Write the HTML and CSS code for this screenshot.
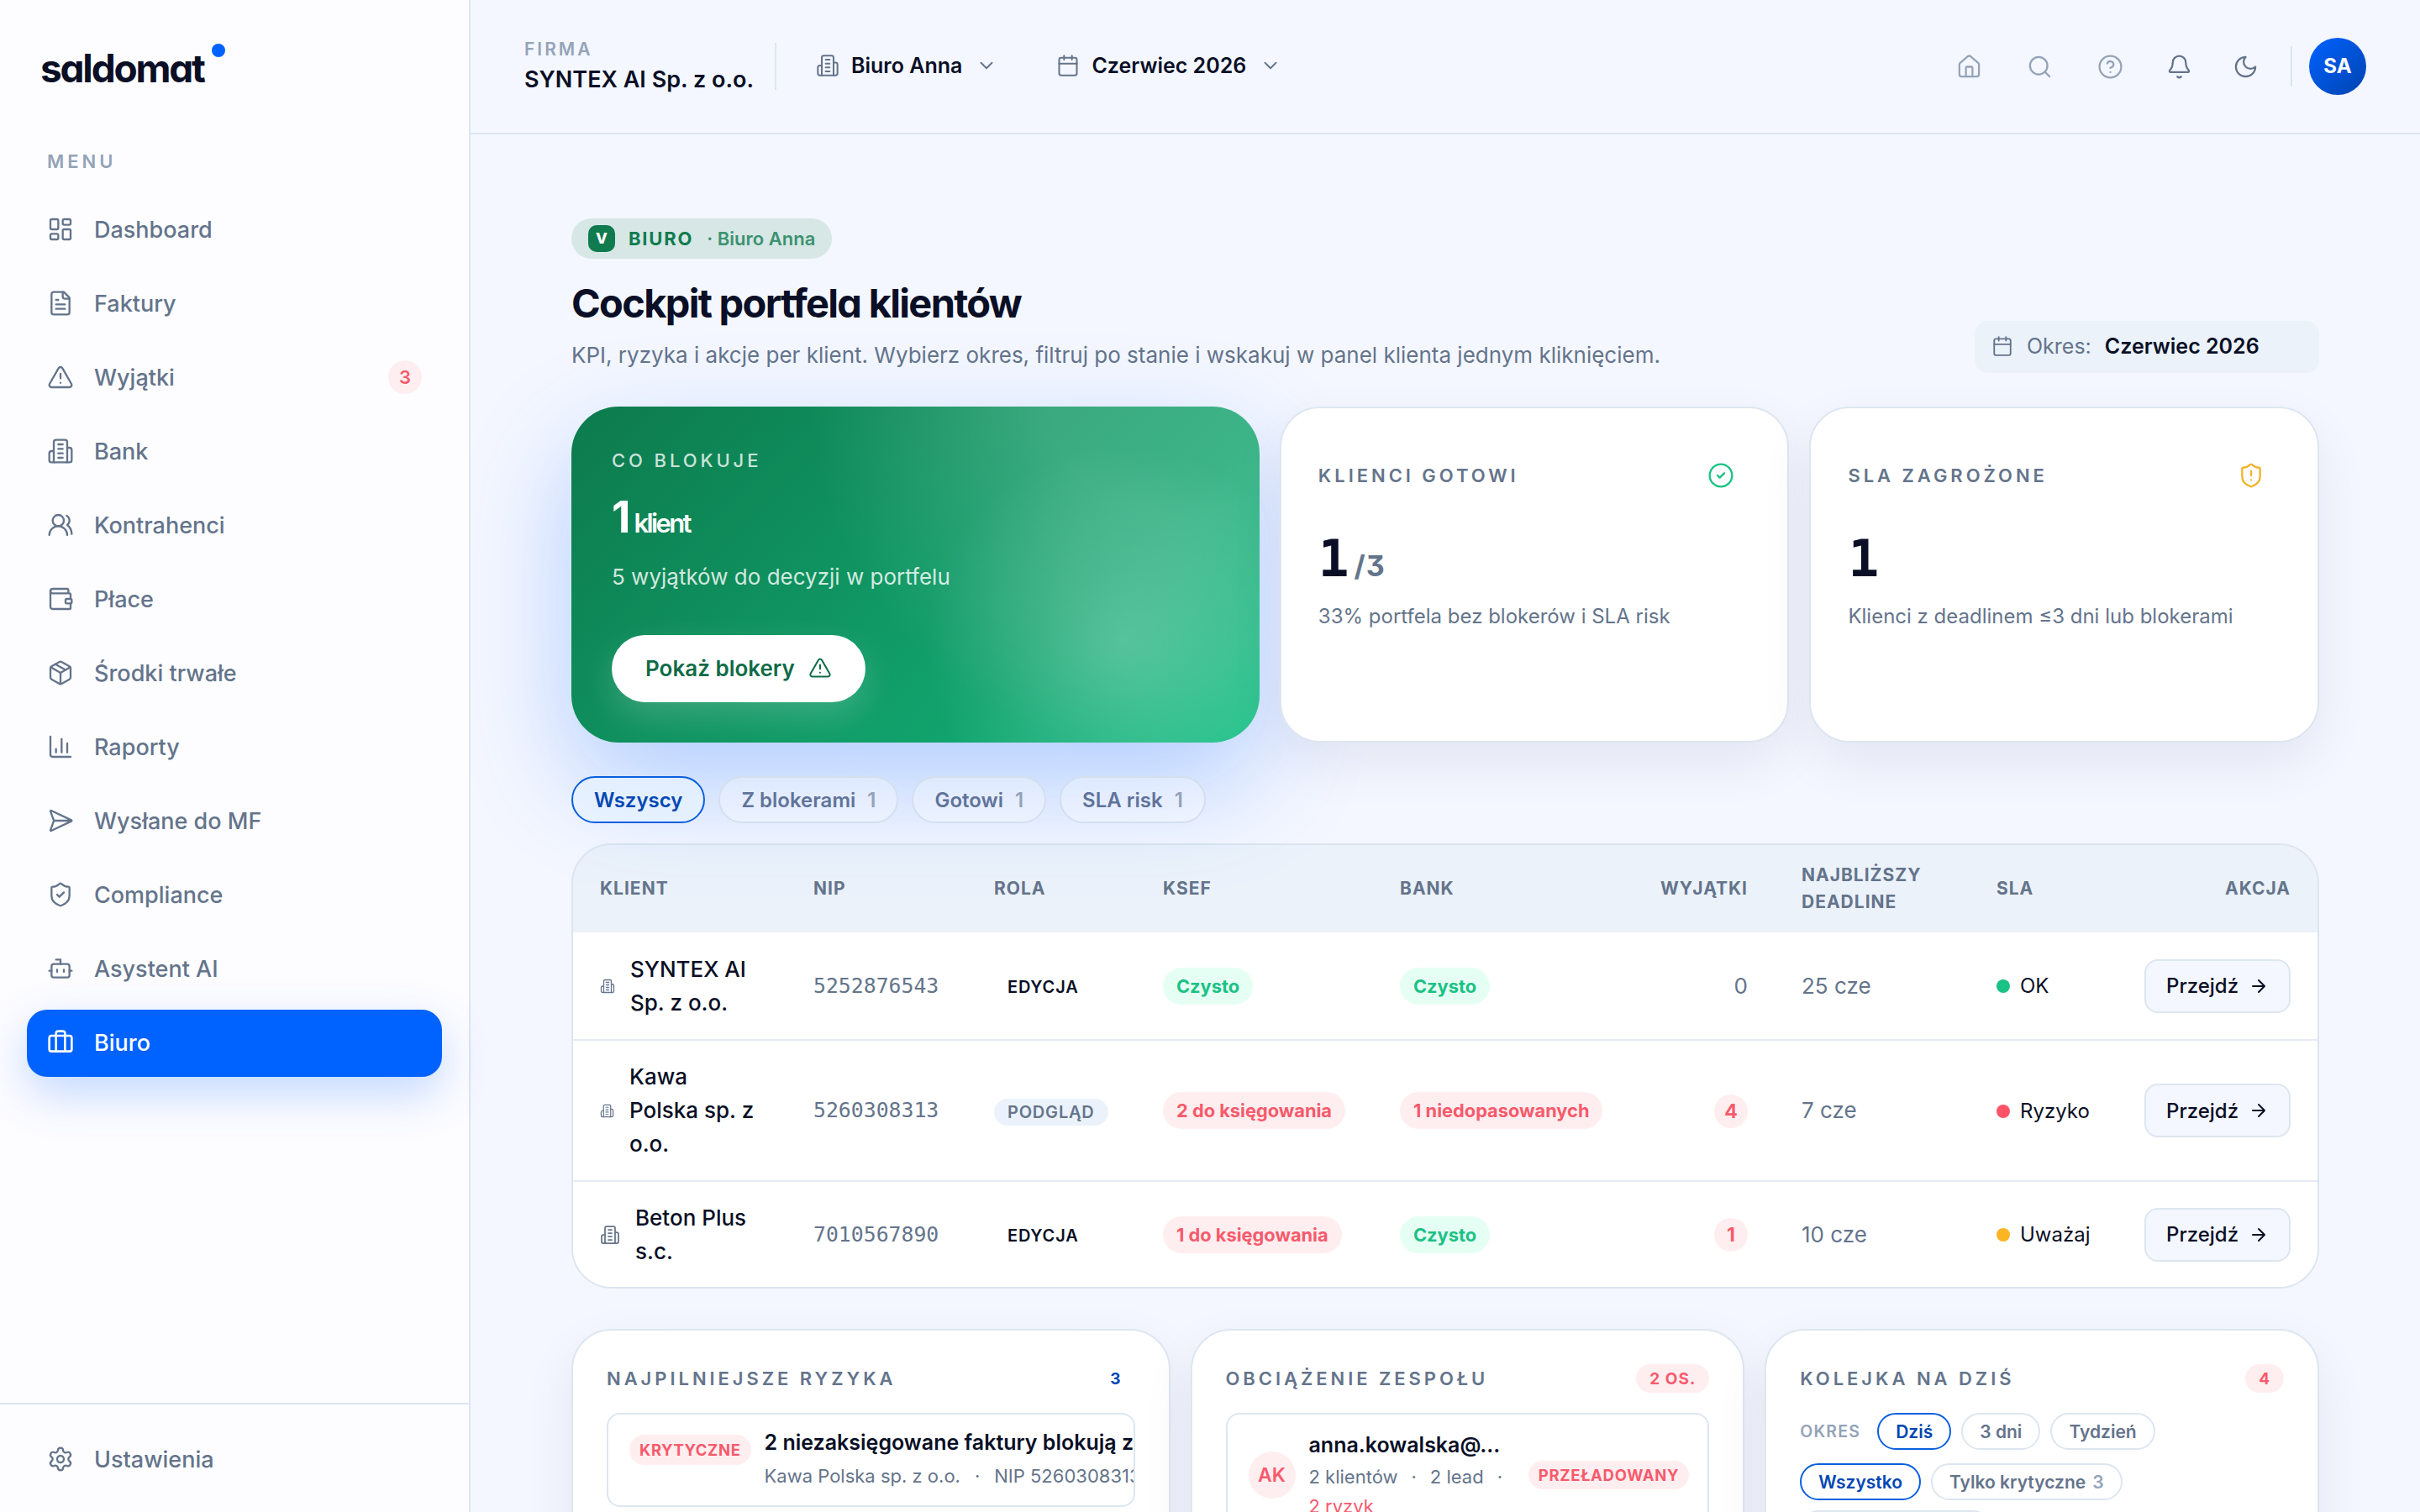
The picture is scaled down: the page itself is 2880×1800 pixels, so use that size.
FILE: index.html
```html
<!DOCTYPE html>
<html lang="pl">
<head>
    <meta charset="UTF-8">
    <meta name="viewport" content="width=device-width, initial-scale=1.0">
    <title>Saldomat • Cockpit portfela klientów</title>
    <link rel="stylesheet" href="styles.css">
</head>
<body>
    <!-- Icon sprite -->
    <svg class="sprite" width="0" height="0">
        <symbol id="i-dashboard" viewBox="0 0 24 24"><rect x="3" y="3" width="7" height="9" rx="1.2"/><rect x="14" y="3" width="7" height="5" rx="1.2"/><rect x="14" y="12" width="7" height="9" rx="1.2"/><rect x="3" y="16" width="7" height="5" rx="1.2"/></symbol>
        <symbol id="i-file" viewBox="0 0 24 24"><path d="M15 2H6a2 2 0 0 0-2 2v16a2 2 0 0 0 2 2h12a2 2 0 0 0 2-2V7Z"/><path d="M14 2v4a2 2 0 0 0 2 2h4M10 9H8M16 13H8M16 17H8"/></symbol>
        <symbol id="i-alert" viewBox="0 0 24 24"><path d="m21.73 18-8-14a2 2 0 0 0-3.48 0l-8 14A2 2 0 0 0 4 21h16a2 2 0 0 0 1.73-3M12 9v4M12 17h.01"/></symbol>
        <symbol id="i-building" viewBox="0 0 24 24"><path d="M6 22V4a2 2 0 0 1 2-2h8a2 2 0 0 1 2 2v18Z"/><path d="M6 12H4a2 2 0 0 0-2 2v6a2 2 0 0 0 2 2h2M18 9h2a2 2 0 0 1 2 2v9a2 2 0 0 1-2 2h-2M10 6h4M10 10h4M10 14h4M10 18h4"/></symbol>
        <symbol id="i-users" viewBox="0 0 24 24"><path d="M18 21a8 8 0 0 0-16 0"/><circle cx="10" cy="8" r="5"/><path d="M22 20c0-3.37-2-6.5-4-8a5 5 0 0 0-.45-8.3"/></symbol>
        <symbol id="i-wallet" viewBox="0 0 24 24"><path d="M19 7V4a1 1 0 0 0-1-1H5a2 2 0 0 0 0 4h15a1 1 0 0 1 1 1v4"/><path d="M3 5v14a2 2 0 0 0 2 2h15a1 1 0 0 0 1-1v-4"/><rect x="16.5" y="12" width="5.5" height="4" rx="1"/></symbol>
        <symbol id="i-box" viewBox="0 0 24 24"><path d="M11 21.73a2 2 0 0 0 2 0l7-4A2 2 0 0 0 21 16V8a2 2 0 0 0-1-1.73l-7-4a2 2 0 0 0-2 0l-7 4A2 2 0 0 0 3 8v8a2 2 0 0 0 1 1.73zM12 22V12"/><path d="m3.3 7 8.7 5 8.7-5M7.5 4.27l9 5.15"/></symbol>
        <symbol id="i-chart" viewBox="0 0 24 24"><path d="M3 3v16a2 2 0 0 0 2 2h16M13 17V5M18 17V9M8 17v-3"/></symbol>
        <symbol id="i-send" viewBox="0 0 24 24"><path d="M3.71 3.05a.5.5 0 0 0-.68.63l2.85 7.63a2 2 0 0 1 0 1.4l-2.85 7.63a.5.5 0 0 0 .68.62l18-8.5a.5.5 0 0 0 0-.9zM6 12h16"/></symbol>
        <symbol id="i-shield-check" viewBox="0 0 24 24"><path d="M20 13c0 5-3.5 7.5-7.66 8.95a1 1 0 0 1-.67-.01C7.5 20.5 4 18 4 13V6a1 1 0 0 1 1-1c2 0 4.5-1.2 6.24-2.72a1.17 1.17 0 0 1 1.52 0C14.51 3.81 17 5 19 5a1 1 0 0 1 1 1z"/><path d="m9 12 2 2 4-4"/></symbol>
        <symbol id="i-shield-alert" viewBox="0 0 24 24"><path d="M20 13c0 5-3.5 7.5-7.66 8.95a1 1 0 0 1-.67-.01C7.5 20.5 4 18 4 13V6a1 1 0 0 1 1-1c2 0 4.5-1.2 6.24-2.72a1.17 1.17 0 0 1 1.52 0C14.51 3.81 17 5 19 5a1 1 0 0 1 1 1z"/><path d="M12 8v4M12 16h.01"/></symbol>
        <symbol id="i-bot" viewBox="0 0 24 24"><path d="M12 8V4H8"/><rect x="4" y="8" width="16" height="12" rx="2"/><path d="M2 14h2M20 14h2M15 13v2M9 13v2"/></symbol>
        <symbol id="i-briefcase" viewBox="0 0 24 24"><path d="M16 20V4a2 2 0 0 0-2-2h-4a2 2 0 0 0-2 2v16"/><rect x="2" y="6" width="20" height="14" rx="2"/></symbol>
        <symbol id="i-settings" viewBox="0 0 24 24"><path d="M9.67 4.14a2.34 2.34 0 0 1 4.66 0 2.34 2.34 0 0 0 3.32 1.91 2.34 2.34 0 0 1 2.33 4.04 2.34 2.34 0 0 0 0 3.82 2.34 2.34 0 0 1-2.33 4.04 2.34 2.34 0 0 0-3.32 1.91 2.34 2.34 0 0 1-4.66 0 2.34 2.34 0 0 0-3.32-1.91 2.34 2.34 0 0 1-2.33-4.04 2.34 2.34 0 0 0 0-3.82 2.34 2.34 0 0 1 2.33-4.04 2.34 2.34 0 0 0 3.32-1.91"/><circle cx="12" cy="12" r="3"/></symbol>
        <symbol id="i-calendar" viewBox="0 0 24 24"><path d="M8 2v4M16 2v4"/><rect x="3" y="4" width="18" height="18" rx="2"/><path d="M3 10h18"/></symbol>
        <symbol id="i-chevron" viewBox="0 0 24 24"><path d="m6 9 6 6 6-6"/></symbol>
        <symbol id="i-home" viewBox="0 0 24 24"><path d="M15 21v-8a1 1 0 0 0-1-1h-4a1 1 0 0 0-1 1v8"/><path d="M3 10a2 2 0 0 1 .71-1.53l7-6a2 2 0 0 1 2.58 0l7 6A2 2 0 0 1 21 10v9a2 2 0 0 1-2 2H5a2 2 0 0 1-2-2z"/></symbol>
        <symbol id="i-search" viewBox="0 0 24 24"><circle cx="11" cy="11" r="8"/><path d="m21 21-4.3-4.3"/></symbol>
        <symbol id="i-help" viewBox="0 0 24 24"><circle cx="12" cy="12" r="10"/><path d="M9.09 9a3 3 0 0 1 5.83 1c0 2-3 3-3 3M12 17h.01"/></symbol>
        <symbol id="i-bell" viewBox="0 0 24 24"><path d="M10.27 21a2 2 0 0 0 3.46 0M3.26 15.33A1 1 0 0 0 4 17h16a1 1 0 0 0 .74-1.67C19.41 13.96 18 12.5 18 8A6 6 0 0 0 6 8c0 4.5-1.41 5.96-2.74 7.33"/></symbol>
        <symbol id="i-moon" viewBox="0 0 24 24"><path d="M12 3a6 6 0 0 0 9 9 9 9 0 1 1-9-9Z"/></symbol>
        <symbol id="i-check" viewBox="0 0 24 24"><circle cx="12" cy="12" r="10"/><path d="m9 12 2 2 4-4"/></symbol>
        <symbol id="i-arrow" viewBox="0 0 24 24"><path d="M5 12h14M12 5l7 7-7 7"/></symbol>
    </svg>

    <div class="app">
        <!-- Sidebar -->
        <aside class="sidebar">
            <div class="logo">saldomat<span class="logo-dot"></span></div>
            <div class="menu-label">MENU</div>
            <nav class="nav">
                <a class="nav-item"><svg class="icon"><use href="#i-dashboard"/></svg>Dashboard</a>
                <a class="nav-item"><svg class="icon"><use href="#i-file"/></svg>Faktury</a>
                <a class="nav-item"><svg class="icon"><use href="#i-alert"/></svg>Wyjątki<span class="nav-badge">3</span></a>
                <a class="nav-item"><svg class="icon"><use href="#i-building"/></svg>Bank</a>
                <a class="nav-item"><svg class="icon"><use href="#i-users"/></svg>Kontrahenci</a>
                <a class="nav-item"><svg class="icon"><use href="#i-wallet"/></svg>Płace</a>
                <a class="nav-item"><svg class="icon"><use href="#i-box"/></svg>Środki trwałe</a>
                <a class="nav-item"><svg class="icon"><use href="#i-chart"/></svg>Raporty</a>
                <a class="nav-item"><svg class="icon"><use href="#i-send"/></svg>Wysłane do MF</a>
                <a class="nav-item"><svg class="icon"><use href="#i-shield-check"/></svg>Compliance</a>
                <a class="nav-item"><svg class="icon"><use href="#i-bot"/></svg>Asystent AI</a>
                <a class="nav-item active"><svg class="icon"><use href="#i-briefcase"/></svg>Biuro</a>
            </nav>
            <div class="sidebar-footer">
                <a class="nav-item"><svg class="icon"><use href="#i-settings"/></svg>Ustawienia</a>
            </div>
        </aside>

        <div class="main">
            <!-- Topbar -->
            <header class="topbar">
                <div class="company">
                    <span class="company-label">FIRMA</span>
                    <span class="company-name">SYNTEX AI Sp. z o.o.</span>
                </div>
                <span class="divider"></span>
                <button class="switcher office"><svg class="icon"><use href="#i-building"/></svg>Biuro Anna<svg class="icon chevron"><use href="#i-chevron"/></svg></button>
                <button class="switcher"><svg class="icon"><use href="#i-calendar"/></svg>Czerwiec 2026<svg class="icon chevron"><use href="#i-chevron"/></svg></button>
                <div class="tools">
                    <svg class="icon muted"><use href="#i-home"/></svg>
                    <svg class="icon muted"><use href="#i-search"/></svg>
                    <svg class="icon muted"><use href="#i-help"/></svg>
                    <svg class="icon bell"><use href="#i-bell"/></svg>
                    <svg class="icon"><use href="#i-moon"/></svg>
                </div>
                <span class="divider short"></span>
                <div class="avatar">SA</div>
            </header>

            <div class="content">
                <div class="page-header">
                    <div>
                        <div class="context-badge">
                            <span class="context-mark">V</span>
                            <span class="context-name">BIURO</span>
                            <span class="context-sub">· Biuro Anna</span>
                        </div>
                        <h1>Cockpit portfela klientów</h1>
                        <p class="subtitle">KPI, ryzyka i akcje per klient. Wybierz okres, filtruj po stanie i wskakuj w panel klienta jednym kliknięciem.</p>
                    </div>
                    <div class="period"><svg class="icon"><use href="#i-calendar"/></svg><span>Okres:</span><strong>Czerwiec 2026</strong></div>
                </div>

                <!-- KPI -->
                <section class="kpis">
                    <div class="hero">
                        <div class="hero-label">CO BLOKUJE</div>
                        <div class="hero-value">1<small>klient</small></div>
                        <p class="hero-text">5 wyjątków do decyzji w portfelu</p>
                        <button class="hero-btn">Pokaż blokery<svg class="icon"><use href="#i-alert"/></svg></button>
                    </div>
                    <div class="card kpi">
                        <div class="kpi-head"><span class="eyebrow">KLIENCI GOTOWI</span><svg class="icon green"><use href="#i-check"/></svg></div>
                        <div class="kpi-value">1<small>/3</small></div>
                        <p class="kpi-text">33% portfela bez blokerów i SLA risk</p>
                    </div>
                    <div class="card kpi">
                        <div class="kpi-head"><span class="eyebrow">SLA ZAGROŻONE</span><svg class="icon amber"><use href="#i-shield-alert"/></svg></div>
                        <div class="kpi-value">1</div>
                        <p class="kpi-text">Klienci z deadlinem ≤3 dni lub blokerami</p>
                    </div>
                </section>

                <div class="filters">
                    <button class="pill active">Wszyscy</button>
                    <button class="pill">Z blokerami<span>1</span></button>
                    <button class="pill">Gotowi<span>1</span></button>
                    <button class="pill">SLA risk<span>1</span></button>
                </div>

                <!-- Clients table -->
                <div class="table-wrap">
                    <table>
                        <colgroup>
                            <col class="c-client"><col class="c-nip"><col class="c-role"><col class="c-ksef"><col class="c-bank">
                            <col class="c-exc"><col class="c-deadline"><col class="c-sla"><col class="c-action">
                        </colgroup>
                        <thead>
                            <tr>
                                <th>KLIENT</th>
                                <th>NIP</th>
                                <th>ROLA</th>
                                <th>KSEF</th>
                                <th>BANK</th>
                                <th class="right">WYJĄTKI</th>
                                <th>NAJBLIŻSZY DEADLINE</th>
                                <th>SLA</th>
                                <th class="right">AKCJA</th>
                            </tr>
                        </thead>
                        <tbody>
                            <tr>
                                <td><div class="client"><svg class="icon s"><use href="#i-building"/></svg><span>SYNTEX AI Sp. z o.o.</span></div></td>
                                <td class="nip">5252876543</td>
                                <td><span class="role">EDYCJA</span></td>
                                <td><span class="tag ok">Czysto</span></td>
                                <td><span class="tag ok">Czysto</span></td>
                                <td class="right dim">0</td>
                                <td class="dim">25 cze</td>
                                <td><span class="sla ok">OK</span></td>
                                <td class="right"><button class="go">Przejdź<svg class="icon"><use href="#i-arrow"/></svg></button></td>
                            </tr>
                            <tr class="tall">
                                <td><div class="client"><svg class="icon xs"><use href="#i-building"/></svg><span>Kawa<br>Polska sp. z<br>o.o.</span></div></td>
                                <td class="nip">5260308313</td>
                                <td><span class="role view">PODGLĄD</span></td>
                                <td><span class="tag bad">2 do księgowania</span></td>
                                <td><span class="tag bad">1 niedopasowanych</span></td>
                                <td class="right"><span class="count">4</span></td>
                                <td class="dim">7 cze</td>
                                <td><span class="sla risk">Ryzyko</span></td>
                                <td class="right"><button class="go">Przejdź<svg class="icon"><use href="#i-arrow"/></svg></button></td>
                            </tr>
                            <tr>
                                <td><div class="client"><svg class="icon"><use href="#i-building"/></svg><span>Beton Plus<br>s.c.</span></div></td>
                                <td class="nip">7010567890</td>
                                <td><span class="role">EDYCJA</span></td>
                                <td><span class="tag bad">1 do księgowania</span></td>
                                <td><span class="tag ok">Czysto</span></td>
                                <td class="right"><span class="count">1</span></td>
                                <td class="dim">10 cze</td>
                                <td><span class="sla warn">Uważaj</span></td>
                                <td class="right"><button class="go">Przejdź<svg class="icon"><use href="#i-arrow"/></svg></button></td>
                            </tr>
                        </tbody>
                    </table>
                </div>

                <!-- Risks, team, queue -->
                <section class="panels">
                    <div class="card panel">
                        <div class="panel-head"><span class="eyebrow">NAJPILNIEJSZE RYZYKA</span><span class="badge blue">3</span></div>
                        <div class="item risk-item">
                            <span class="badge level">KRYTYCZNE</span>
                            <div class="item-body">
                                <div class="item-title">2 niezaksięgowane faktury blokują zamknięcie</div>
                                <div class="item-meta">Kawa Polska sp. z o.o.<i>·</i>NIP 5260308313</div>
                            </div>
                        </div>
                    </div>
                    <div class="card panel">
                        <div class="panel-head"><span class="eyebrow">OBCIĄŻENIE ZESPOŁU</span><span class="badge">2 OS.</span></div>
                        <div class="item team-item">
                            <span class="initials">AK</span>
                            <div class="item-body">
                                <div class="item-title">anna.kowalska@...</div>
                                <div class="item-meta">2 klientów<i>·</i>2 lead<i>·</i><br><em>2 ryzyk</em></div>
                            </div>
                            <span class="badge load">PRZEŁADOWANY</span>
                        </div>
                    </div>
                    <div class="card panel">
                        <div class="panel-head"><span class="eyebrow">KOLEJKA NA DZIŚ</span><span class="badge">4</span></div>
                        <div class="queue-row">
                            <span class="queue-label">OKRES</span>
                            <button class="pill small active">Dziś</button>
                            <button class="pill small">3 dni</button>
                            <button class="pill small">Tydzień</button>
                        </div>
                        <div class="queue-row">
                            <button class="pill small active">Wszystko</button>
                            <button class="pill small">Tylko krytyczne<span>3</span></button>
                            <button class="pill small">Tylko zagrożone<span>1</span></button>
                        </div>
                    </div>
                </section>
            </div>
        </div>
    </div>
</body>
</html>
```

FILE: styles.css
```css
* {
    margin: 0;
    padding: 0;
    box-sizing: border-box;
}

:root {
    --bg: #f4f7ff;
    --ink: #0a0f26;
    --slate: #64748b;
    --muted: #94a3b8;
    --line: #dde6f0;
    --blue: #0062ff;
    --blue-dark: #0047b3;
    --red: #f75a6c;
    --red-soft: #ffeef0;
    --green: #1bc285;
    --green-soft: #e6fff4;
    --amber: #fbb424;
}

body {
    font-family: Inter, 'Liberation Sans', sans-serif;
    background: var(--bg);
    color: var(--ink);
    height: 100vh;
    overflow: hidden;
}

button {
    font-family: inherit;
    color: inherit;
    background: none;
    border: none;
}

.sprite {
    display: none;
}

.icon {
    width: 32px;
    height: 32px;
    flex-shrink: 0;
    fill: none;
    stroke: currentColor;
    stroke-width: 1.75;
    stroke-linecap: round;
    stroke-linejoin: round;
}

.app {
    display: flex;
    height: 100vh;
}

/* Sidebar */
.sidebar {
    width: 560px;
    flex-shrink: 0;
    display: flex;
    flex-direction: column;
    background: #fdfdff;
    border-right: 2px solid var(--line);
    position: relative;
    z-index: 1;
}

.logo {
    display: flex;
    height: 178px;
    padding: 50px 0 0 48px;
    font-size: 46px;
    line-height: 62px;
    font-weight: 700;
    letter-spacing: -2.2px;
    font-feature-settings: "cv11";
}

.logo-dot {
    width: 16px;
    height: 16px;
    margin: 2px 0 0 9px;
    border-radius: 50%;
    background: var(--blue);
}

.menu-label {
    height: 56px;
    padding-left: 56px;
    font-size: 22px;
    line-height: 28px;
    font-weight: 600;
    letter-spacing: 4px;
    color: var(--muted);
}

.nav {
    flex: 1;
    display: flex;
    flex-direction: column;
    gap: 8px;
    padding: 0 32px;
}

.nav-item {
    display: flex;
    align-items: center;
    gap: 24px;
    height: 80px;
    padding: 0 24px 2px;
    border-radius: 24px;
    font-size: 27px;
    font-weight: 500;
    color: var(--slate);
}

.nav-item.active {
    background: var(--blue);
    color: #fff;
    box-shadow: 0 20px 56px rgba(0, 98, 255, 0.24);
}

.nav-item.active .icon {
    stroke-width: 2;
}

.nav-badge {
    width: 40px;
    height: 40px;
    margin-left: auto;
    border-radius: 50%;
    background: var(--red-soft);
    color: var(--red);
    font-size: 22px;
    line-height: 40px;
    font-weight: 600;
    text-align: center;
}

.sidebar-footer {
    height: 130px;
    padding: 26px 32px;
    border-top: 2px solid var(--line);
}

/* Topbar */
.main {
    flex: 1;
    min-width: 0;
}

.topbar {
    display: flex;
    align-items: center;
    height: 160px;
    padding: 0 64px;
    border-bottom: 2px solid var(--line);
}

.company {
    display: flex;
    flex-direction: column;
    gap: 3px;
    width: 298px;
}

.company-label {
    font-size: 21px;
    line-height: 28px;
    font-weight: 600;
    letter-spacing: 3px;
    color: var(--muted);
}

.company-name {
    font-size: 27px;
    line-height: 38px;
    font-weight: 600;
    white-space: nowrap;
}

.divider {
    width: 2px;
    height: 56px;
    background: var(--line);
}

.divider.short {
    height: 48px;
    margin: 0 20px 0 38px;
}

.switcher {
    display: flex;
    align-items: center;
    gap: 14px;
    padding-bottom: 2px;
    font-size: 25px;
    font-weight: 600;
}

.switcher.office {
    margin: 0 70px 0 47px;
}

.switcher .icon {
    width: 28px;
    height: 28px;
    color: var(--slate);
}

.switcher .chevron {
    width: 26px;
    height: 26px;
    margin-left: 2px;
}

.tools {
    display: flex;
    gap: 53px;
    margin-left: auto;
    color: var(--slate);
}

.tools .icon {
    width: 31px;
    height: 31px;
}

.tools .muted {
    color: var(--muted);
}

.tools .bell {
    margin: 0 -5px 0 -2px;
}

.avatar {
    width: 68px;
    height: 68px;
    border-radius: 50%;
    background: linear-gradient(135deg, #0062ff, #0044b0);
    color: #fff;
    font-size: 24px;
    line-height: 68px;
    font-weight: 700;
    text-align: center;
}

/* Page header */
.content {
    padding: 100px 120px 0;
}

.page-header {
    display: flex;
    justify-content: space-between;
    align-items: flex-end;
    margin-bottom: 40px;
}

.context-badge {
    display: inline-flex;
    align-items: center;
    height: 48px;
    padding: 0 20px;
    border-radius: 24px;
    background: #d7e7e6;
    color: #0f7b4f;
    font-size: 22px;
}

.context-mark {
    width: 32px;
    height: 32px;
    border-radius: 10px;
    background: #0f7b4f;
    color: #fff;
    font-size: 18px;
    line-height: 32px;
    font-weight: 800;
    text-align: center;
}

.context-name {
    margin: 0 16px;
    font-weight: 700;
    letter-spacing: 1.8px;
}

.context-sub {
    font-weight: 600;
    color: #3c9270;
}

h1 {
    margin-top: 24px;
    font-size: 47px;
    line-height: 58px;
    font-weight: 700;
    letter-spacing: -1.7px;
    font-feature-settings: "cv11";
}

.subtitle {
    margin-top: 12px;
    font-size: 26px;
    line-height: 42px;
    color: var(--slate);
}

.period {
    display: flex;
    align-items: center;
    gap: 16px;
    width: 410px;
    height: 62px;
    padding: 0 0 2px 20px;
    border-radius: 16px;
    background: #ebf2fa;
    font-size: 25px;
    color: var(--slate);
}

.period .icon {
    width: 26px;
    height: 26px;
}

.period strong {
    color: var(--ink);
    font-weight: 600;
}

/* KPI cards */
.kpis {
    display: grid;
    grid-template-columns: 1.35fr 1fr 1fr;
    gap: 24px;
    height: 400px;
}

.card {
    background: #fff;
    border: 2px solid var(--line);
    border-radius: 48px;
    box-shadow: 0 24px 64px rgba(20, 20, 90, 0.07);
}

.hero {
    padding: 48px;
    border-radius: 56px;
    background:
        radial-gradient(circle 235px at 80% 70%, rgba(255, 255, 255, 0.21), rgba(255, 255, 255, 0)),
        radial-gradient(circle 440px at 88% -5%, rgba(255, 255, 255, 0.18) 35%, rgba(255, 255, 255, 0)),
        linear-gradient(135deg, #0d7a4d 0%, #11a36d 68%, #1fc38b 100%);
    box-shadow: 0 48px 128px rgba(0, 98, 255, 0.28);
    color: #fff;
}

.hero-label {
    font-size: 22px;
    line-height: 32px;
    font-weight: 500;
    letter-spacing: 3.9px;
    color: rgba(255, 255, 255, 0.8);
}

.hero-value {
    height: 60px;
    margin-top: 22px;
    font-size: 52px;
    line-height: 60px;
    font-weight: 700;
    letter-spacing: -2px;
    font-feature-settings: "cv11";
}

.hero-value small {
    margin-left: 6px;
    font-size: 31px;
    line-height: 1;
    font-weight: 600;
    letter-spacing: -2.6px;
}

.hero-text {
    margin-top: 21px;
    font-size: 26px;
    line-height: 40px;
    color: rgba(255, 255, 255, 0.82);
}

.hero-btn {
    display: flex;
    align-items: center;
    gap: 16px;
    height: 80px;
    margin-top: 49px;
    padding: 0 40px 2px;
    border-radius: 40px;
    background: #fff;
    box-shadow: 0 16px 40px rgba(255, 255, 255, 0.18);
    font-size: 26px;
    font-weight: 600;
    color: #0f6b47;
}

.hero-btn .icon {
    width: 28px;
    height: 28px;
}

.kpi {
    padding: 64px 63px 0 44px;
}

.kpi-head {
    display: flex;
    justify-content: space-between;
    align-items: center;
    height: 32px;
}

.eyebrow {
    font-size: 22px;
    font-weight: 600;
    letter-spacing: 3.95px;
    color: var(--slate);
}

.kpi-head .green {
    color: var(--green);
}

.kpi-head .amber {
    color: #f2b32a;
}

.kpi-value {
    height: 60px;
    margin-top: 53px;
    font-family: 'DejaVu Sans Mono', monospace;
    font-size: 61px;
    line-height: 60px;
    font-weight: 700;
}

.kpi-value small {
    margin-left: 6px;
    font-family: Inter, sans-serif;
    font-size: 34px;
    line-height: 1;
    font-weight: 700;
    letter-spacing: 1px;
    font-feature-settings: "cv09";
    color: var(--slate);
}

.kpi-text {
    margin-top: 21px;
    font-size: 24px;
    line-height: 36px;
    color: var(--slate);
}

/* Filter pills */
.filters {
    display: flex;
    gap: 16px;
    margin: 40px 0 24px;
}

.pill {
    height: 56px;
    padding: 0 25px;
    border: 2px solid #d3dfee;
    border-radius: 28px;
    background: rgba(255, 255, 255, 0.3);
    font-size: 24px;
    font-weight: 600;
    color: #60739a;
    white-space: nowrap;
}

.pill span {
    margin-left: 14px;
    color: var(--muted);
}

.pill.active {
    border-color: #0a5fdf;
    background: rgba(230, 241, 255, 0.8);
    color: var(--blue-dark);
}

.pill.small {
    height: 44px;
    padding: 0 20px;
    border-color: var(--line);
    background: #fff;
    font-size: 21px;
    color: var(--slate);
}

.pill.small span {
    margin-left: 8px;
}

.pill.small.active {
    border-color: #0a5fdf;
    color: var(--blue-dark);
}

/* Clients table */
.table-wrap {
    border: 2px solid var(--line);
    border-radius: 48px;
    overflow: hidden;
}

table {
    width: 100%;
    table-layout: fixed;
    border-collapse: collapse;
}

.c-client { width: 254px; }
.c-nip { width: 215px; }
.c-role { width: 201px; }
.c-ksef { width: 282px; }
.c-bank { width: 307px; }
.c-exc { width: 171px; }
.c-deadline { width: 232px; }
.c-sla { width: 176px; }
.c-action { width: 238px; }

th,
td {
    padding: 0 32px;
    text-align: left;
    vertical-align: middle;
}

thead tr {
    height: 104px;
    background: rgba(232, 240, 249, 0.8);
}

th {
    font-size: 21px;
    line-height: 32px;
    font-weight: 700;
    letter-spacing: 1px;
    color: var(--slate);
}

tbody tr {
    height: 128px;
    background: #fff;
    border-bottom: 2px solid #e5eaf5;
}

tbody tr.tall {
    height: 168px;
}

tbody tr:last-child {
    height: 126px;
    border-bottom: none;
}

td {
    font-size: 26px;
    line-height: 40px;
    white-space: nowrap;
}

.right {
    text-align: right;
}

.client {
    display: flex;
    align-items: center;
    gap: 18px;
    font-weight: 500;
}

.client span {
    white-space: normal;
}

.client .icon {
    width: 24px;
    height: 24px;
    color: var(--slate);
}

.client .icon.s {
    width: 18px;
    height: 18px;
}

.client .icon.xs {
    width: 17px;
    height: 17px;
}

.nip {
    font-family: 'DejaVu Sans Mono', monospace;
    font-size: 24.8px;
    color: var(--slate);
}

.dim {
    color: var(--slate);
}

.role {
    display: inline-block;
    height: 32px;
    padding: 0 16px;
    border-radius: 16px;
    font-size: 20px;
    line-height: 33px;
    font-weight: 600;
    letter-spacing: 0.8px;
    vertical-align: middle;
}

.role.view {
    background: #ebf2fb;
    color: var(--slate);
}

.tag {
    display: inline-block;
    height: 44px;
    padding: 0 16px;
    border-radius: 22px;
    font-size: 21.8px;
    line-height: 44px;
    font-weight: 700;
    vertical-align: middle;
}

.tag.ok {
    background: var(--green-soft);
    color: var(--green);
}

.tag.bad {
    background: var(--red-soft);
    color: var(--red);
}

.count {
    display: inline-block;
    width: 40px;
    height: 40px;
    border-radius: 50%;
    background: var(--red-soft);
    color: var(--red);
    font-size: 23px;
    font-weight: 700;
    text-align: center;
    vertical-align: middle;
}

.sla {
    font-size: 24px;
}

.sla::before {
    content: '';
    display: inline-block;
    width: 16px;
    height: 16px;
    margin-right: 12px;
    border-radius: 50%;
    background: var(--green);
}

.sla.risk::before {
    background: #ff5468;
}

.sla.warn::before {
    background: var(--amber);
}

.go {
    display: inline-flex;
    align-items: center;
    gap: 12px;
    height: 64px;
    padding: 0 24px;
    border: 2px solid var(--line);
    border-radius: 16px;
    background: var(--bg);
    font-size: 24px;
    font-weight: 500;
    vertical-align: middle;
}

.go .icon {
    width: 24px;
    height: 24px;
    stroke-width: 2;
}

/* Bottom panels */
.panels {
    display: grid;
    grid-template-columns: 1.08fr 1fr 1fr;
    gap: 24px;
    margin-top: 48px;
}

.panel {
    min-width: 0;
    height: 700px;
    padding: 40px;
}

.panel-head {
    display: flex;
    justify-content: space-between;
    align-items: center;
    height: 34px;
    margin-bottom: 24px;
}

.badge {
    flex-shrink: 0;
    height: 34px;
    padding: 0 16px;
    border-radius: 17px;
    background: var(--red-soft);
    color: var(--red);
    font-size: 19px;
    line-height: 35px;
    font-weight: 700;
    letter-spacing: 1px;
}

.badge.blue {
    background: none;
    color: var(--blue-dark);
}

.item {
    display: flex;
    border: 2px solid var(--line);
    border-radius: 16px;
    overflow: hidden;
}

.item-title {
    font-size: 25px;
    line-height: 36px;
    font-weight: 600;
    white-space: nowrap;
}

.item-meta {
    font-size: 22px;
    line-height: 35px;
    color: var(--slate);
    white-space: nowrap;
}

.item-meta i {
    margin: 0 16px;
    font-style: normal;
}

.item-meta em {
    font-style: normal;
    color: var(--red);
}

.risk-item {
    height: 112px;
    gap: 16px;
    padding: 15px 0 0 25px;
}

.risk-item .item-meta {
    margin-top: 5px;
}

.risk-item .item-meta i {
    margin: 0 17px;
}

.badge.level {
    height: 36px;
    margin-top: 9px;
    padding: 0 12px;
    border-radius: 18px;
    font-size: 18.5px;
    line-height: 37px;
    letter-spacing: 0.6px;
}

.team-item {
    align-items: center;
    height: 148px;
    padding: 0 22px 0 25px;
}

.team-item .item-body {
    flex: 1;
    margin-left: 16px;
}

.team-item .item-meta {
    margin-top: 3px;
}

.badge.load {
    padding: 0 12px;
    font-size: 18.5px;
    letter-spacing: 0.7px;
}

.initials {
    width: 56px;
    height: 56px;
    border-radius: 50%;
    background: var(--red-soft);
    color: var(--red);
    font-size: 23px;
    line-height: 56px;
    font-weight: 600;
    text-align: center;
}

.queue-row {
    display: flex;
    flex-wrap: wrap;
    align-items: center;
    gap: 12px;
    margin-bottom: 16px;
}

.queue-label {
    margin-right: 8px;
    font-size: 19.5px;
    font-weight: 600;
    letter-spacing: 1.2px;
    color: var(--muted);
}
```
